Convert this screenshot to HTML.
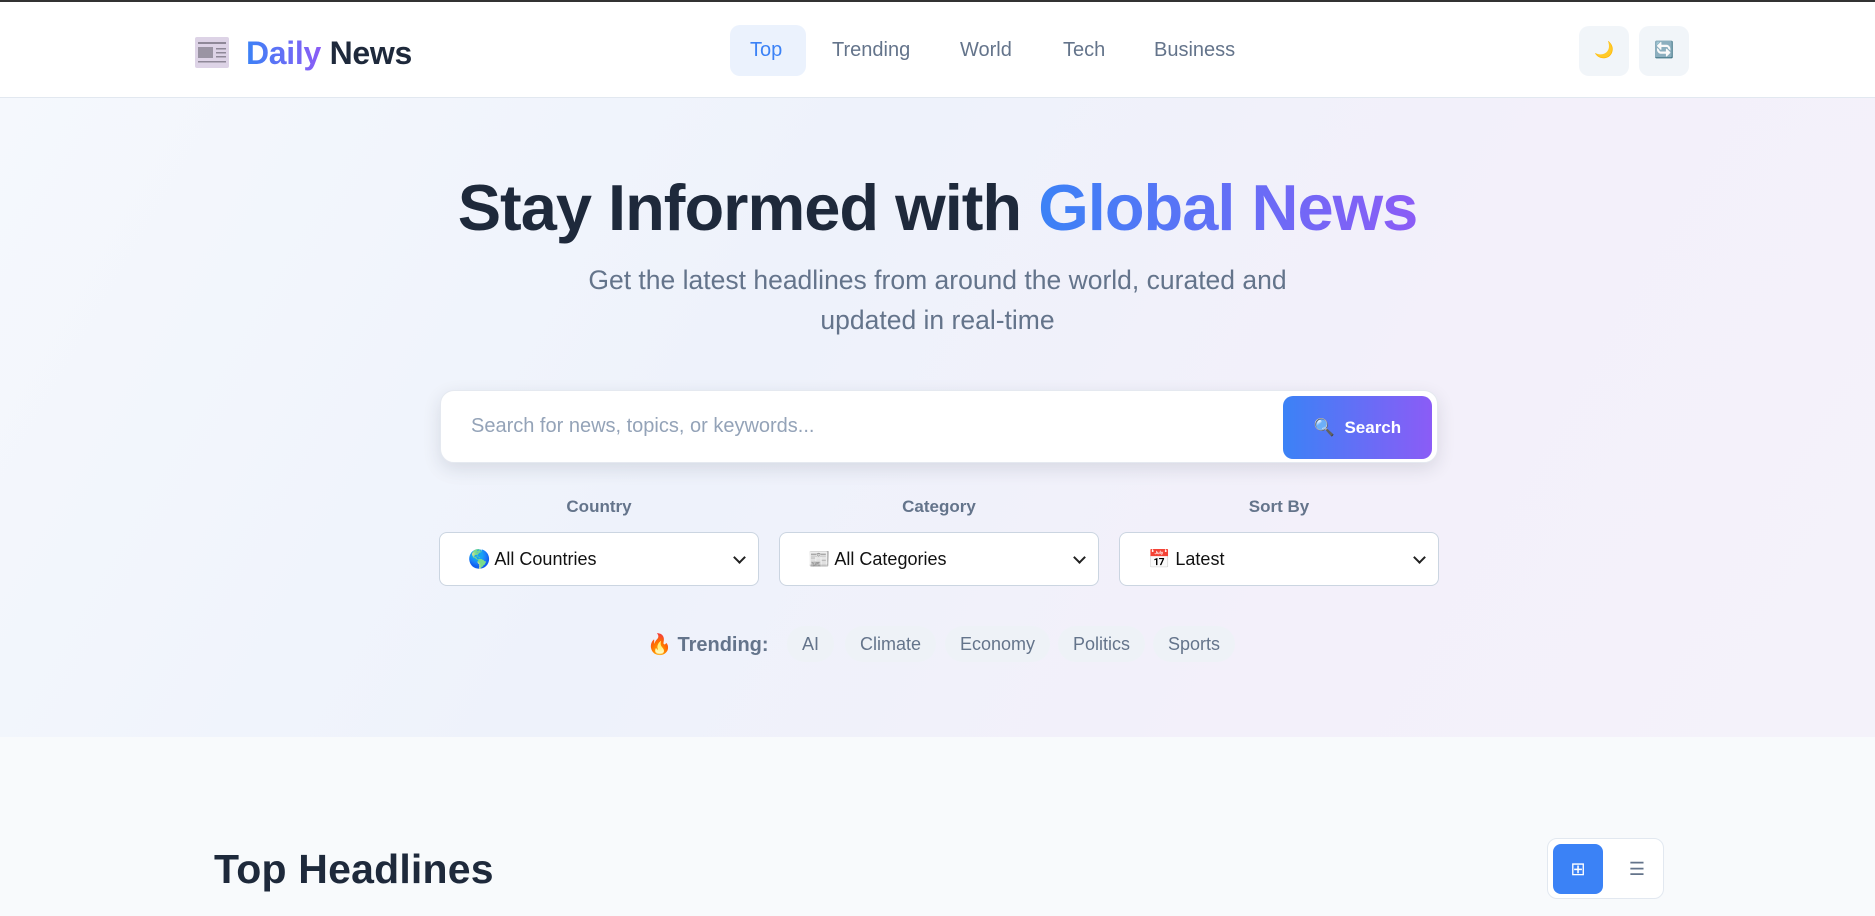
<!DOCTYPE html>
<html><head><meta charset="utf-8"><style>
*{box-sizing:border-box;margin:0;padding:0}
body{width:1875px;height:916px;overflow:hidden;font-family:"Liberation Sans","Noto Sans CJK SC",sans-serif;background:#f8fafc;position:relative}
.hdr{position:absolute;top:0;left:0;width:1875px;height:98px;background:#fff;border-top:2px solid #333;border-bottom:1px solid #e2e8f0}
.logo{position:absolute;left:195px;top:33px;font-size:32px;font-weight:bold;letter-spacing:-0.3px}
.nav a{position:absolute;top:23px;height:51px;line-height:51px;font-size:20px;color:#64748b;text-decoration:none;padding:0 20px;border-radius:10px}
.ib{position:absolute;top:24px;width:50px;height:50px;border-radius:10px;background:#f1f5f9;text-align:center;line-height:50px;font-size:16px}
.hero{position:absolute;top:98px;left:0;width:1875px;height:639px;background:linear-gradient(120deg,#f5f8fd 0%,#eef2fb 40%,#f3f0fa 70%,#f4f2fa 100%)}
h1{position:absolute;top:170px;width:1875px;text-align:center;font-size:65px;font-weight:bold;color:#1e293b;letter-spacing:-1px}
.g{background:linear-gradient(90deg,#3b82f6,#8b5cf6);-webkit-background-clip:text;color:transparent}
.sub{position:absolute;top:260px;width:1875px;text-align:center;font-size:26.5px;line-height:40px;color:#64748b}
.search{position:absolute;left:440px;top:390px;width:998px;height:73px;background:#fff;border-radius:14px;box-shadow:0 6px 18px rgba(30,41,59,.12);border:1px solid #e5e9f0}
.search span{position:absolute;left:30px;top:24px;font-size:20px;color:#94a3b8}
.btn{position:absolute;right:5px;top:5px;width:149px;height:63px;border-radius:10px;background:linear-gradient(90deg,#3b82f6,#8b5cf6);color:#fff;font-weight:bold;font-size:17px;text-align:center;line-height:63px}
.lbl{position:absolute;top:497px;width:320px;text-align:center;font-size:17px;font-weight:bold;color:#64748b}
.sel{position:absolute;top:532px;width:320px;height:54px;background:#fff;border:1px solid #cbd5e1;border-radius:8px;font-size:18px;color:#111;line-height:52px;padding-left:28px}
.sel:after{content:"";position:absolute;right:14px;top:20px;width:7px;height:7px;border-right:2px solid #222;border-bottom:2px solid #222;transform:rotate(45deg)}
.tr{position:absolute;top:632px;left:647px;font-size:20px;font-weight:bold;color:#64748b}
.chip{position:absolute;top:626px;height:36px;line-height:36px;padding:0 15px;border-radius:18px;background:#eef2f7;color:#64748b;font-size:18px}
h2{position:absolute;left:214px;top:846px;font-size:41px;font-weight:bold;color:#1e293b;letter-spacing:0.2px}
.tog{position:absolute;left:1547px;top:838px;width:117px;height:61px;background:#fff;border:1px solid #e2e8f0;border-radius:10px}
</style></head><body>
<div class="hdr">
<svg style="position:absolute;left:195px;top:35px" width="34" height="31" viewBox="0 0 34 31"><rect width="34" height="31" rx="2" fill="#ddd3e6"/><rect x="3" y="5" width="28" height="2" fill="#8f8898"/><rect x="3" y="10" width="15" height="11" fill="#9a94a3"/><rect x="21" y="11" width="10" height="1.5" fill="#8f8898"/><rect x="21" y="15" width="10" height="1.5" fill="#8f8898"/><rect x="21" y="19" width="10" height="1.5" fill="#8f8898"/><rect x="3" y="24" width="28" height="1.5" fill="#8f8898"/></svg>
<div class="logo" style="left:246px"><span class="g">Daily</span> <span style="color:#1e293b">News</span></div>
<div class="nav"><a style="left:730px;width:76px;background:#ebf2fd;color:#3b82f6">Top</a><a style="left:812px">Trending</a><a style="left:940px">World</a><a style="left:1043px">Tech</a><a style="left:1134px">Business</a></div>
<div class="ib" style="left:1579px">🌙</div><div class="ib" style="left:1639px">🔄</div>
</div>
<div class="hero"></div>
<h1>Stay Informed with <span class="g">Global News</span></h1>
<div class="sub">Get the latest headlines from around the world, curated and<br>updated in real-time</div>
<div class="search"><span>Search for news, topics, or keywords...</span><div class="btn">🔍&nbsp;&nbsp;Search</div></div>
<div class="lbl" style="left:439px">Country</div><div class="lbl" style="left:779px">Category</div><div class="lbl" style="left:1119px">Sort By</div>
<div class="sel" style="left:439px">🌎 All Countries</div><div class="sel" style="left:779px">📰 All Categories</div><div class="sel" style="left:1119px">📅 Latest</div>
<div class="tr">🔥 Trending:</div>
<div class="chip" style="left:787px">AI</div><div class="chip" style="left:845px">Climate</div><div class="chip" style="left:945px">Economy</div><div class="chip" style="left:1058px">Politics</div><div class="chip" style="left:1153px">Sports</div>
<h2>Top Headlines</h2>
<div class="tog"><div style="position:absolute;left:5px;top:5px;width:50px;height:50px;background:#3b82f6;border-radius:8px;color:#fff;text-align:center;line-height:50px;font-size:18px">⊞</div><div style="position:absolute;left:64px;top:5px;width:50px;height:50px;text-align:center;line-height:50px;color:#64748b;font-size:18px">☰</div></div>
</body></html>
